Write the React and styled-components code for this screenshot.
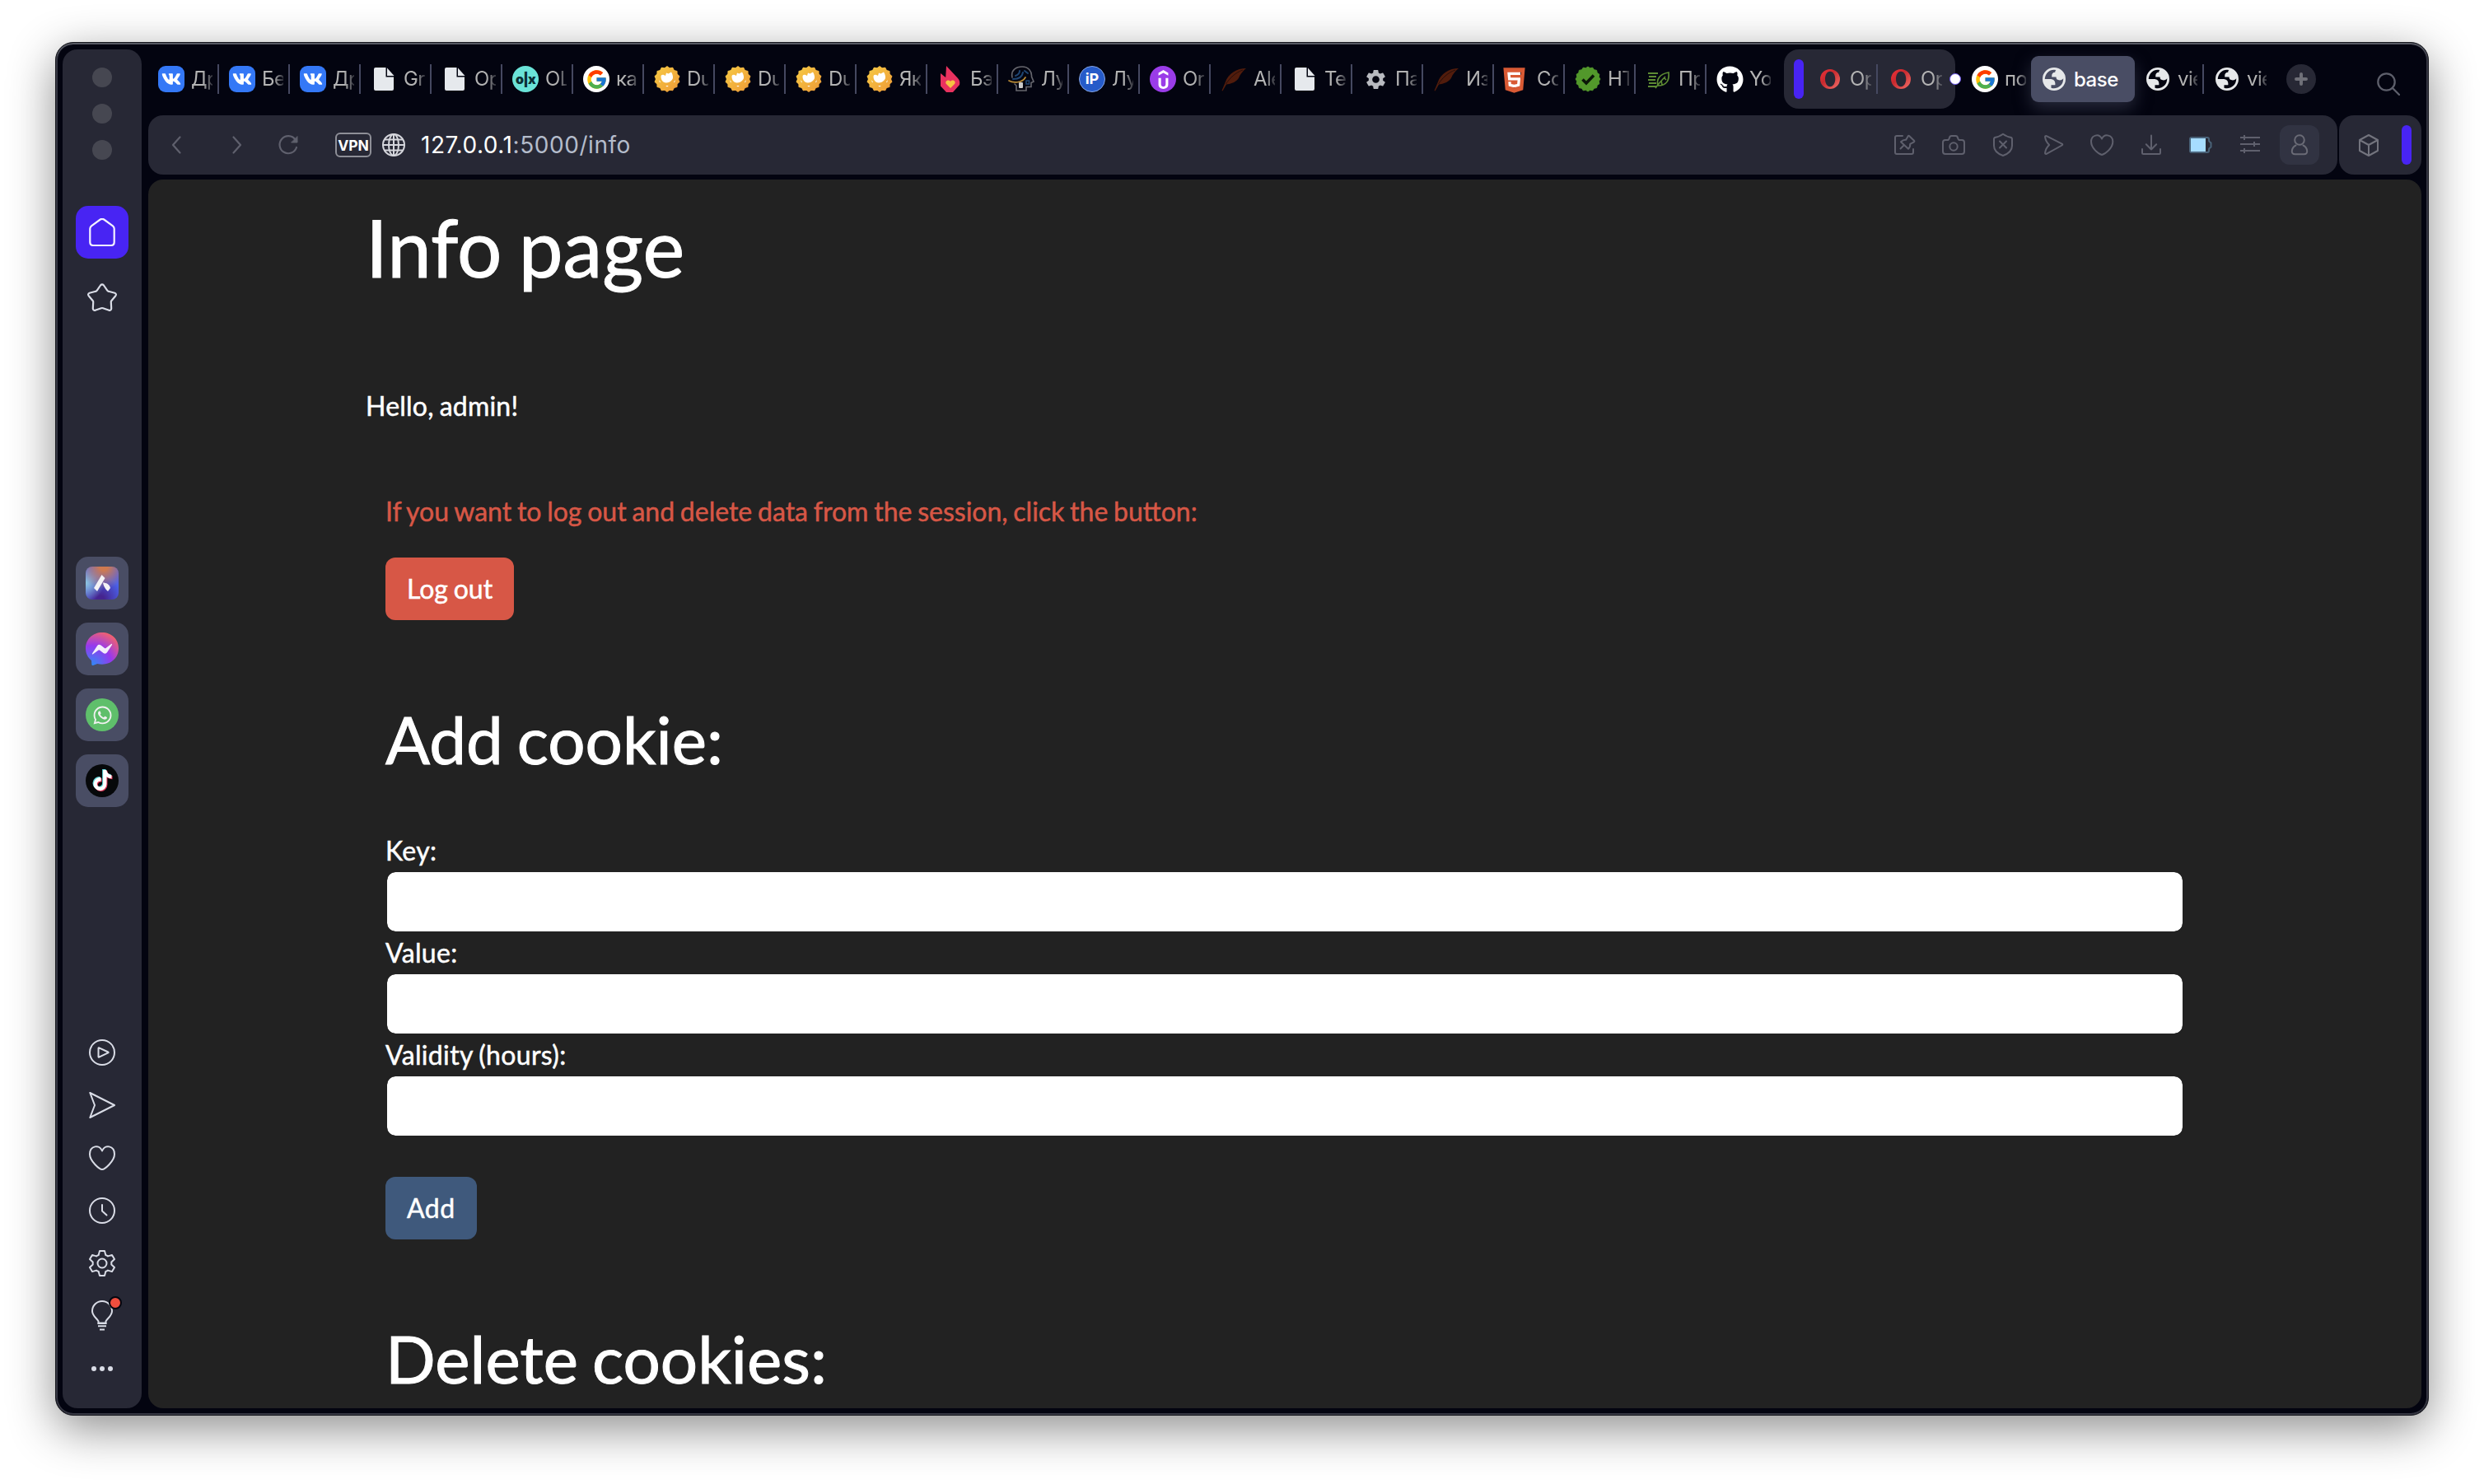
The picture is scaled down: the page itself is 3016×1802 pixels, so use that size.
import React from 'react';
import styled, { createGlobalStyle, css } from 'styled-components';
import { FcGoogle } from 'react-icons/fc';
import { FaVk, FaGithub, FaHtml5, FaWhatsapp, FaTiktok } from 'react-icons/fa';
import { SiUdemy } from 'react-icons/si';
import { MdSettings } from 'react-icons/md';

const GlobalStyle = createGlobalStyle`
  * { box-sizing: border-box; }
  body { margin: 0; background: #fff; }
  svg { display: block; flex: none; }
`;

/* ---------- window frame ---------- */
const Desktop = styled.div`
  width: 3016px;
  height: 1802px;
  padding: 51px 67px 83px;
  overflow: hidden;
  background: #fff;
  font-family: Inter, 'Noto Sans', sans-serif;
`;
const Window = styled.div`
  display: flex;
  gap: 8px;
  width: 2882px;
  height: 1668px;
  padding: 8px;
  border: 1px solid #17181e;
  border-radius: 22px;
  background: #030410;
  box-shadow: inset 0 2px 0 #565862, inset 0 0 0 2px #353642,
    0 16px 56px rgba(0, 0, 0, 0.45);
`;
const Main = styled.div`
  display: flex;
  flex-direction: column;
  flex: 1;
  min-width: 0;
`;

/* ---------- sidebar ---------- */
const Sidebar = styled.aside`
  display: flex;
  flex-direction: column;
  align-items: center;
  flex: none;
  width: 96px;
  padding: 22px 0 16px;
  border-radius: 18px;
  background: #272835;
`;
const Lights = styled.div`
  display: flex;
  flex-direction: column;
  gap: 20px;
`;
const Light = styled.i`
  width: 24px;
  height: 24px;
  border-radius: 50%;
  background: #464751;
`;
const SideGroup = styled.nav`
  display: flex;
  flex-direction: column;
  gap: ${(p) => p.$gap}px;
  margin-top: ${(p) => p.$top};
`;
const SideButton = styled.div`
  position: relative;
  display: flex;
  align-items: center;
  justify-content: center;
  width: 64px;
  height: 64px;
  border-radius: 15px;
  color: #d9dce6;
  background: ${(p) => p.$bg || 'transparent'};
`;
const Notice = styled.i`
  position: absolute;
  top: 8px;
  right: 8px;
  width: 16px;
  height: 16px;
  border: 2px solid #05060f;
  border-radius: 50%;
  background: #f04e3e;
`;
const AppIcon = styled.div`
  position: relative;
  display: flex;
  align-items: center;
  justify-content: center;
  width: 40px;
  height: 40px;
  border-radius: ${(p) => p.$radius || '50%'};
  background: ${(p) => p.$bg || 'transparent'};
  color: #f0f0f0;
`;
const NoteLayer = styled.span`
  position: absolute;
  left: ${(p) => 8 + p.$shift}px;
  top: ${(p) => 7 + p.$shift}px;
  color: ${(p) => p.$color};
`;

/* ---------- tabs ---------- */
const TabStrip = styled.header`
  display: flex;
  align-items: center;
  height: 72px;
  margin-bottom: 8px;
`;
const TabBox = styled.div`
  display: flex;
  align-items: center;
  flex: none;
  width: ${(p) => p.$w}px;
  height: 36px;
  padding-left: 12px;
  border-right: 2px solid ${(p) => (p.$last ? 'transparent' : '#454860')};
`;
const Favicon = styled.div`
  display: flex;
  align-items: center;
  justify-content: center;
  flex: none;
  width: 32px;
  height: 32px;
  margin-right: 8px;
`;
const TabTitle = styled.span`
  width: ${(p) => p.$w}px;
  overflow: hidden;
  color: #b4b4b4;
  font-size: 24px;
  letter-spacing: -0.6px;
  line-height: 36px;
  white-space: nowrap;
  mask-image: linear-gradient(to right, #000 55%, transparent 115%);
`;
const TabIsland = styled.div`
  position: relative;
  display: flex;
  align-items: center;
  width: 208px;
  height: 72px;
  margin: 0 8px;
  padding-left: 12px;
  border-radius: 18px;
  background: #272835;
`;
const IslandMark = styled.i`
  width: 12px;
  height: 48px;
  margin-right: ${(p) => p.$gap || 0}px;
  border-radius: 6px;
  background: #4824f3;
`;
const IslandDot = styled.i`
  position: absolute;
  top: 29px;
  right: -7px;
  width: 14px;
  height: 14px;
  border: 1px solid #6b55ea;
  border-radius: 50%;
  background: #fff;
`;
const ActiveTab = styled.div`
  display: flex;
  align-items: center;
  gap: 10px;
  width: 126px;
  height: 56px;
  margin-left: -2px;
  padding-left: 14px;
  border-radius: 9px;
  background: #494d64;
  box-shadow: 0 8px 20px rgba(73, 77, 100, 0.5);
  color: #fff;
  font-size: 24px;
  font-weight: 500;
  letter-spacing: -0.5px;
`;
const NewTab = styled.div`
  display: flex;
  align-items: center;
  justify-content: center;
  width: 36px;
  height: 36px;
  margin-left: 16px;
  border-radius: 50%;
  background: #272835;
`;
const SearchSlot = styled.div`
  margin: 12px 26px 0 auto;
`;
const badgeText = css`
  font-family: Inter, sans-serif;
  font-weight: 700;
  line-height: 32px;
  text-align: center;
`;
const RoundBadge = styled.div`
  ${badgeText}
  display: flex;
  align-items: center;
  justify-content: center;
  width: 32px;
  height: 32px;
  border-radius: ${(p) => p.$radius || '50%'};
  border: ${(p) => p.$border || 'none'};
  background: ${(p) => p.$bg};
  color: ${(p) => p.$fg || '#fff'};
  font-size: ${(p) => p.$size || 16}px;
  font-weight: ${(p) => p.$weight || 700};
  letter-spacing: ${(p) => p.$track || 0}px;
`;
const ShieldBadge = styled.div`
  display: flex;
  justify-content: center;
  width: 28px;
  height: 32px;
  margin-right: auto;
  margin-left: -2px;
  background: linear-gradient(#fff, #fff) center / 16px 20px no-repeat;
`;

/* ---------- address bar ---------- */
const ToolRow = styled.div`
  display: flex;
  gap: 2px;
  height: 72px;
  margin-bottom: 6px;
`;
const AddressBar = styled.div`
  display: flex;
  align-items: center;
  width: 2658px;
  padding: 0 16px 0 0;
  border-radius: 18px;
  background: #272835;
`;
const NavButtons = styled.div`
  display: grid;
  grid-template-columns: 74px 62px 32px;
  padding-left: 18px;
  color: #5f606d;
`;
const Vpn = styled.span`
  width: 44px;
  height: 30px;
  margin: 0 13px 0 41px;
  border: 2px solid #8e8f97;
  border-radius: 6px;
  color: #fff;
  font-size: 17.5px;
  font-weight: 700;
  line-height: 27px;
  text-align: center;
`;
const Url = styled.span`
  margin-left: 19px;
  color: #b4bccb;
  font-size: 28px;
  letter-spacing: 0.56px;
  white-space: nowrap;
`;
const Host = styled.span`
  color: #fff;
`;
const Actions = styled.div`
  display: flex;
  margin-left: auto;
  color: #5f606d;
`;
const Action = styled.div`
  display: flex;
  align-items: center;
  justify-content: center;
  width: 60px;
  height: 48px;
`;
const Profile = styled.div`
  display: flex;
  align-items: center;
  justify-content: center;
  width: 48px;
  height: 48px;
  border-radius: 12px;
  background: #313342;
`;
const SideTools = styled.div`
  display: flex;
  align-items: center;
  justify-content: space-between;
  width: 100px;
  padding: 0 12px 0 20px;
  border-radius: 18px;
  background: #272835;
  color: #73747e;
`;

/* ---------- web page ---------- */
const Page = styled.main`
  flex: 1;
  min-height: 0;
  overflow: hidden;
  padding: 24px 288px 0 264px;
  border-radius: 18px;
  background: #222;
  color: #fff;
  font-family: Lato, sans-serif;
  font-size: 32px;
  line-height: 48px;
  word-spacing: -0.045em;
  -webkit-text-stroke: 0.5px currentColor;
`;
const Title = styled.h1`
  margin: 0 0 112px;
  font-size: 96px;
  font-weight: 400;
  line-height: 115px;
  word-spacing: -0.045em;
  -webkit-text-stroke-width: 1px;
`;
const Greeting = styled.p`
  margin: 0 0 80px;
  letter-spacing: 0.22px;
`;
const Section = styled.section`
  padding-left: 24px;
`;
const Warning = styled.p`
  margin: 0 0 32px;
  color: #d75746;
`;
const Button = styled.button`
  display: block;
  height: 76px;
  padding: 0 26px;
  border: 0;
  border-radius: 12px;
  background: ${(p) => (p.$danger ? '#d75746' : '#3f597c')};
  color: #fff;
  font: inherit;
  letter-spacing: ${(p) => p.$track || 0}px;
  word-spacing: -0.045em;
`;
const Heading = styled.h2`
  margin: 96px 0 64px;
  font-size: 80px;
  font-weight: 400;
  line-height: 96px;
  word-spacing: -0.045em;
  -webkit-text-stroke-width: 1px;
`;
const Label = styled.label`
  display: block;
  letter-spacing: 0.35px;
`;
const Input = styled.input`
  display: block;
  width: 100%;
  height: 76px;
  border: 2px solid #222;
  border-radius: 12px;
  background: #fff;
  background-clip: padding-box;
`;
const Form = styled.form`
  margin: 0;
`;
const Submit = styled.div`
  margin-top: 48px;
`;

/* ---------- drawn icons ---------- */
const Line = ({ size = 32, w = 2, children, ...rest }) => (
  <svg width={size} height={size} viewBox="0 0 32 32" fill="none" stroke="currentColor"
    strokeWidth={w} strokeLinecap="round" strokeLinejoin="round" {...rest}>{children}</svg>
);

const DocIcon = () => (
  <svg width="32" height="32" viewBox="0 0 32 32" fill="#e6e9ed">
    <path d="M6 2h12.500v11.500H28V28a2 2 0 0 1-2 2H6a2 2 0 0 1-2-2V4a2 2 0 0 1 2-2z" />
    <path d="M20 2.500 28.500 12H20z" />
  </svg>
);
const scallop = (cx, cy, r, d, n) => {
  const pts = [];
  for (let i = 0; i < n * 2; i += 1) {
    const a = (Math.PI * i) / n - Math.PI / 2;
    const q = i % 2 ? r - d : r;
    pts.push(`${(cx + q * Math.cos(a)).toFixed(2)},${(cy + q * Math.sin(a)).toFixed(2)}`);
  }
  return pts.join(' ');
};
const OwlIcon = () => (
  <svg width="32" height="32" viewBox="0 0 32 32">
    <defs>
      <linearGradient id="owl" x1="0" y1="0" x2="1" y2="1">
        <stop offset="0" stopColor="#f7cb45" /><stop offset="1" stopColor="#ee9a36" />
      </linearGradient>
    </defs>
    <polygon points={scallop(16, 16, 15.2, 1.8, 14)} fill="url(#owl)" stroke="url(#owl)" strokeWidth="1.2" strokeLinejoin="round" />
    <path fill="#fff" d="M8.500 13c0-1.800 1.500-2.500 3.500-2l2 1 1-3.500 2.500 1L21 7.500c1 1.500 1.800 3.500 2 5.500.3 2-.5 3.500-1.800 4.800-1.700 2.400-7 3.700-9.700 1.700-2-1.500-3-3.500-3-6.500z" />
    <path fill="#fff" d="M6 17l2 2.500-1 .8zM26 17l-2 2.500 1 .8zM14.200 24h3.600l-1.800 1.600z" />
  </svg>
);
const FlameIcon = () => (
  <svg width="32" height="32" viewBox="0 0 32 32">
    <path fill="#e9325f" d="M11 0l14 15c2.500 3 2.500 5 2 8l-8 9h-8L4 24.500V9l6.200 5z" />
    <path fill="#f6c343" d="M16 27l-5-5c-2.500-3 2-6.500 5-3.200 3-3.300 7.500.2 5 3.200z" />
  </svg>
);
const HeadIcon = () => (
  <svg width="32" height="32" viewBox="0 0 32 32" fill="none" strokeLinecap="round">
    <path stroke="#67676e" strokeWidth="1.600" d="M5 14C3 5 10 1 17 1c8 0 12 6 11.500 12l2.500 6-3 1.500v5h-6v4.500H10v-6l-2-2" />
    <path stroke="#1f4673" strokeWidth="2" d="M6 16c6 0 11-2 12-8M9 12c3-1 5-3 5-6M20 6l4 3" />
    <path stroke="#b98a35" strokeWidth="1.700" d="M1 18c5 3 16 3 20-4" />
    <rect x="13" y="20" width="5" height="7" rx="1" fill="#c9c9c9" />
    <path stroke="#1f4673" strokeWidth="1.500" d="M22 18h3.500v4H22z" />
  </svg>
);
const FeatherIcon = () => (
  <svg width="32" height="32" viewBox="0 0 32 32">
    <path fill="#511c0c" d="M31 3C20 3 9 9 5.500 20.500L1.500 30l1 .5L7 22.500c10-1 15-6 16.500-11C26 8 28 5 31 3z" />
    <path stroke="#1c0b0b" strokeWidth=".8" fill="none" d="M6.500 22C11 15 18 8 27 5" />
  </svg>
);
const CheckBadge = () => (
  <svg width="32" height="32" viewBox="0 0 32 32">
    <polygon points={scallop(16, 16, 15, 1.500, 16)} fill="#52982b" stroke="#52982b" strokeLinejoin="round" />
    <path fill="none" stroke="#0b1708" strokeWidth="3.600" d="M9.500 16.500l4.500 4.500L23 11.500" />
  </svg>
);
const LeafIcon = () => (
  <svg width="32" height="32" viewBox="0 0 32 32" fill="none" stroke="#5d8b33" strokeWidth="2">
    <path d="M3 9h12M4 13h9M3 17h9M4 21h9M3 25h10" />
    <path d="M15 24c-2-8 2-14 13-16 1 9-2 16-13 16zM12 27c4-6 8-10 12-14M19 18l1 5M22 14l3 3" strokeWidth="1.700" />
  </svg>
);
const OperaIcon = () => (
  <svg width="24" height="24" viewBox="0 0 24 24">
    <defs>
      <linearGradient id="op" x1="0" y1="0" x2="1" y2="1">
        <stop offset="0" stopColor="#f0323a" /><stop offset=".4" stopColor="#c9292e" /><stop offset="1" stopColor="#f2706a" />
      </linearGradient>
    </defs>
    <path fillRule="evenodd" fill="url(#op)" d="M12 0a12 12 0 1 1 0 24 12 12 0 0 1 0-24zM12 2.800c-3.800 0-6 4.200-6 9.200s2.200 9.200 6 9.200 6.300-4.200 6.300-9.200S15.800 2.800 12 2.800z" />
  </svg>
);
const GlobeIcon = () => (
  <svg width="28" height="28" viewBox="2 2 20 20" fill="#e6e8ea">
    <path fillRule="evenodd" d="M12 2a10 10 0 1 0 0 20 10 10 0 0 0 0-20zM4 12h4.400c3.407.022 4.922 1.730 4.543 5.127H9.488v2.470a8.004 8.004 0 0 0 10.498-8.083C19.327 12.504 18.332 13 17 13c-2.137 0-3.206-.916-3.206-2.750h-3.748c-.274-2.728.683-4.092 2.870-4.092 0-.975.327-1.597.811-1.970A8.004 8.004 0 0 0 4 12z" />
  </svg>
);
const GoogleBadge = () => (
  <RoundBadge $bg="#fff"><FcGoogle size={27} /></RoundBadge>
);
const VkBadge = () => (
  <RoundBadge $bg="#3478f6" $radius="9px"><FaVk size={24} /></RoundBadge>
);

const favicons = {
  vk: <VkBadge />,
  doc: <DocIcon />,
  olx: <RoundBadge $bg="#6ae3d8" $fg="#0a2f35" $size={16} $weight={900} $track={-0.8}>o|x</RoundBadge>,
  google: <GoogleBadge />,
  owl: <OwlIcon />,
  flame: <FlameIcon />,
  head: <HeadIcon />,
  ip: <RoundBadge $bg="#265bc9" $border="1px solid #86a5e2" $size={18}>iP</RoundBadge>,
  udemy: <RoundBadge $bg="#9a3ce8"><SiUdemy size={23} /></RoundBadge>,
  feather: <FeatherIcon />,
  gear: <MdSettings size={29} color="#b8bac0" />,
  html5: <ShieldBadge><FaHtml5 size={35} color="#d95a34" /></ShieldBadge>,
  check: <CheckBadge />,
  leaf: <LeafIcon />,
  github: <FaGithub size={33} color="#fff" />,
  opera: <OperaIcon />,
  globe: <GlobeIcon />,
};

const tabs = [
  ['vk', 'Др'], ['vk', 'Бе'], ['vk', 'Др'], ['doc', 'Gr'], ['doc', 'Op'], ['olx', 'OL'],
  ['google', 'ка'], ['owl', 'Du'], ['owl', 'Du'], ['owl', 'Du'], ['owl', 'Як'], ['flame', 'Бэ'],
  ['head', 'Лу'], ['ip', 'Лу'], ['udemy', 'Or'], ['feather', 'Ale'], ['doc', 'Te'], ['gear', 'Па'],
  ['feather', 'Из'], ['html5', 'Со'], ['check', 'HT'], ['leaf', 'Пр'], ['github', 'Yo'],
];

const Tab = ({ icon, title, last, w = 86 }) => (
  <TabBox $w={w} $last={last}>
    <Favicon>{favicons[icon]}</Favicon>
    <TabTitle $w={w - 60}>{title}</TabTitle>
  </TabBox>
);

const SearchIcon = () => (
  <Line size={28} w={2.3} color="#5d5f6b" viewBox="0 0 28 28">
    <circle cx="11.500" cy="11.500" r="10.200" /><path d="M18.800 18.800L27 27" />
  </Line>
);

const Tabs = () => (
  <TabStrip>
    {tabs.map(([icon, title], i) => (
      <Tab key={i} icon={icon} title={title} last={i === tabs.length - 1} />
    ))}
    <TabIsland>
      <IslandMark $gap={4} />
      <Tab icon="opera" title="Op" />
      <Tab icon="opera" title="Op" last />
      <IslandDot />
    </TabIsland>
    <Tab icon="google" title="по" last />
    <ActiveTab><GlobeIcon />base</ActiveTab>
    <Tab icon="globe" title="vie" w={84} />
    <Tab icon="globe" title="vie" w={84} last />
    <NewTab>
      <Line size={16} w={4} viewBox="0 0 16 16" color="#6f7078"><path d="M8 2v12M2 8h12" /></Line>
    </NewTab>
    <SearchSlot><SearchIcon /></SearchSlot>
  </TabStrip>
);

const Toolbar = () => (
  <ToolRow>
    <AddressBar>
      <NavButtons>
        <Line w={2.2}><path d="M20.500 6.500L12 16l8.500 9.500" /></Line>
        <Line w={2.2}><path d="M11.500 6.500l8.500 9.500-8.500 9.500" /></Line>
        <Line w={2.2}>
          <path d="M24.500 9.500A10.500 10.500 0 1 0 26 19" /><path d="M27 6v7h-7z" fill="currentColor" strokeWidth="1" />
        </Line>
      </NavButtons>
      <Vpn>VPN</Vpn>
      <Line size={28} w={2} viewBox="0 0 28 28" color="#d5d6dc">
        <circle cx="14" cy="14" r="13" /><ellipse cx="14" cy="14" rx="6" ry="13" />
        <path d="M14 1v26M1 14h26M3.500 7.500h21M3.500 20.500h21" />
      </Line>
      <Url><Host>127.0.0.1</Host>:5000/info</Url>
      <Actions>
        <Action><Line>
          <path d="M14 5H7a2 2 0 0 0-2 2v18a2 2 0 0 0 2 2h18a2 2 0 0 0 2-2v-4" />
          <path d="M11.500 20.500l4.300-4.300M12 12.300c2-2 4-2.800 6.200-2.500l2.600-4.600q.7-.8 1.500 0l5.700 5.600q.8.800 0 1.500l-4.800 2.500c.3 2.400-.5 4.400-2.200 6z" />
        </Line></Action>
        <Action><Line>
          <path d="M6 10h2.500c1.500 0 2-1 2.300-2.300C11.200 5.800 12 5 13.500 5h5c1.500 0 2.300.8 2.700 2.700C21.500 9 22 10 23.500 10H26a3 3 0 0 1 3 3v11a3 3 0 0 1-3 3H6a3 3 0 0 1-3-3V13a3 3 0 0 1 3-3z" />
          <circle cx="16" cy="18" r="4.700" />
        </Line></Action>
        <Action><Line>
          <path d="M16 2.800C12.500 5.200 9 6.500 7 6.700q-2 .3-2 2.300v8c0 6 5.500 10 11 12 5.500-2 11-6 11-12V9q0-2-2-2.300c-2-.2-5.500-1.500-9-3.900z" />
          <path d="M12 11.500l8 8M20 11.500l-8 8" />
        </Line></Action>
        <Action><Line>
          <path d="M8.800 5.200l18.700 9.400q1.600 1 0 1.900L8.800 26.800q-2 .6-1.700-1.500c.5-3.300 2-6.500 5-9.300-3-2.800-4.500-6-5-9.300q-.3-2.100 1.700-1.500z" />
        </Line></Action>
        <Action><Line>
          <path d="M16 28c-4-1-13-8-13-16 0-8 9.500-10.500 13-3.500 3.500-7 13.300-4.500 13.300 3.500 0 8-9.300 15-13.300 16z" />
        </Line></Action>
        <Action><Line><path d="M16 4.500v17M9.800 15.300L16 21.500l6.200-6.200M5 21v4.500a1.500 1.500 0 0 0 1.500 1.500h19a1.500 1.500 0 0 0 1.500-1.500V21" /></Line></Action>
        <Action><Line color="#4a6379">
          <path d="M5 7h19q2 0 2 2l.2 2.500 2.300 2v5l-2.300 2L26 23q0 2-2 2H5q-2 0-2-2V9q0-2 2-2z" />
          <rect x="4" y="8" width="18" height="16" fill="#a6dcff" stroke="none" />
        </Line></Action>
        <Action><Line><path strokeLinecap="butt" d="M4 7h24M4 15h24M4 23h24M9 4v6M21 12v6M9 20v6" /></Line></Action>
        <Action><Profile><Line color="#6a6b76">
          <circle cx="16" cy="10" r="5.800" />
          <path d="M11.500 16.500C8.500 18 7 20.500 6.800 23.500 6.700 26 8 27.200 10.500 27.200h11c2.500 0 3.800-1.200 3.700-3.700-.2-3-1.700-5.500-4.700-7" />
        </Line></Profile></Action>
      </Actions>
    </AddressBar>
    <SideTools>
      <Line><path d="M16 4l11 6v13l-11 6-11-6V10zM5 10l11 6 11-6M16 16v13" /></Line>
      <IslandMark />
    </SideTools>
  </ToolRow>
);

const SideNav = () => (
  <Sidebar>
    <Lights><Light /><Light /><Light /></Lights>
    <SideGroup $gap={16} $top="56px">
      <SideButton $bg="#4824f3">
        <Line size={34} viewBox="0 0 34 34" w={2.200} color="#f4f2ff">
          <path d="M14.800 1.500q2.200-1.300 4.400 0L30 9.300q1.700 1.400 1.700 3.500V29q0 4-4 4H6.300q-4 0-4-4V12.800q0-2.100 1.700-3.500z" />
        </Line>
      </SideButton>
      <SideButton>
        <Line size={36} viewBox="0 0 36 36" w={2.200}>
          <path d="M16 2.500q2-2.200 4 0l4.200 6.200q.6.900 1.600 1.100l7.500 2q2.600 1.100 1 3.400l-5 6q-.6.800-.5 1.800l.4 7.600q-.3 2.700-2.800 2.200l-7.300-2.600q-1.100-.4-2.200 0l-7.300 2.600q-2.500.5-2.800-2.200l.4-7.600q.1-1-.5-1.800l-5-6q-1.600-2.300 1-3.400l7.500-2q1-.2 1.600-1.100z" />
        </Line>
      </SideButton>
    </SideGroup>
    <SideGroup $gap={16} $top="282px">
      <SideButton $bg="#494d64">
        <AppIcon $radius="8px" $bg="radial-gradient(circle at 55% 0%, #cf7a50 10%, transparent 60%), radial-gradient(circle at 0% 50%, #8fc6dd, transparent 50%), radial-gradient(circle at 45% 100%, #45248f 10%, transparent 60%), #4b62ea">
          <svg width="40" height="40" viewBox="0 0 40 40" fill="#f4f2f5">
            <path d="M19.500 10l4 4L14 30l-4-4z" /><path d="M21 19.500c4 0 8 2 9 6.500l-3 4c-2-1.500-5-5-6-10.500z" />
          </svg>
        </AppIcon>
      </SideButton>
      <SideButton $bg="#494d64">
        <svg width="40" height="40" viewBox="0 0 40 40">
          <defs>
            <radialGradient id="ms" cx=".2" cy="1" r="1.100">
              <stop offset="0" stopColor="#2f8bf5" /><stop offset=".55" stopColor="#9638ee" /><stop offset="1" stopColor="#f5636a" />
            </radialGradient>
          </defs>
          <path fill="url(#ms)" d="M20 0c11.300 0 20 8.200 20 19.300S31.300 38.700 20 38.700c-2 0-4-.3-5.800-.8L9 40q-1.700.3-1.700-1.500L7 34C2.500 30.500 0 25.500 0 19.300 0 8.200 8.700 0 20 0z" />
          <path fill="#f4eefb" d="M8 25.500l6-9.300q1.800-2.500 4.500-.8l4.500 3.500q.7.500 1.500 0l6.500-4.800q1.500-.8 1 .8l-6 9.300q-1.800 2.500-4.500.8l-4.500-3.500q-.7-.5-1.500 0L9 26.300q-1.600.8-1-.8z" />
        </svg>
      </SideButton>
      <SideButton $bg="#494d64"><AppIcon $bg="#5fbf6b"><FaWhatsapp size={25} /></AppIcon></SideButton>
      <SideButton $bg="#494d64">
        <AppIcon $bg="#06080a">
          <NoteLayer $color="#64d8dc" $shift={-1}><FaTiktok size={25} /></NoteLayer>
          <NoteLayer $color="#df3759" $shift={1}><FaTiktok size={25} /></NoteLayer>
          <NoteLayer $color="#fff" $shift={0}><FaTiktok size={25} /></NoteLayer>
        </AppIcon>
      </SideButton>
    </SideGroup>
    <SideGroup $gap={0} $top="auto">
      <SideButton><Line><circle cx="16" cy="16" r="15" /><path d="M11.500 10.800q0-.8.800-.5l11 5.200q.8.500 0 .9l-11 5.300q-.8.300-.8-.5z" /></Line></SideButton>
      <SideButton><Line><path d="M1.300 1L31 16 1.300 31 7 16z" /></Line></SideButton>
      <SideButton><Line><path d="M16 30C13 30 1 20 1 11.500 1 1 13 -1 16 7.500 19 -1 31 1 31 11.500 31 20 19 30 16 30z" /></Line></SideButton>
      <SideButton><Line><circle cx="16" cy="16" r="15" /><path d="M16 9v7.500l5.500 5" /></Line></SideButton>
      <SideButton><Line>
        <path d="M13 1h6l1.300 5q1.600.6 2.700 1.400l5-1.500 3 5.200-3.700 3.500v2.800L31 20.900l-3 5.200-5-1.500q-1.100.9-2.700 1.400L19 31h-6l-1.300-5q-1.600-.6-2.700-1.400l-5 1.500-3-5.200 3.700-3.500v-2.800L1 11.100l3-5.200 5 1.500Q10.100 6.500 11.700 6z" />
        <circle cx="16" cy="16" r="5.500" />
      </Line></SideButton>
      <SideButton>
        <svg width="32" height="38" viewBox="0 0 32 38" fill="none" stroke="currentColor" strokeWidth="2">
          <path d="M11.500 27.500v-2C10 22 4 19 4 13a12 12 0 0 1 24 0c0 6-6 9-7.500 12.500v2z" />
          <path d="M10.500 28h11M11 31.300h10M13 35.500h6" />
        </svg>
        <Notice />
      </SideButton>
      <SideButton><Line stroke="none" fill="currentColor"><circle cx="6" cy="16" r="3" /><circle cx="16" cy="16" r="3" /><circle cx="26" cy="16" r="3" /></Line></SideButton>
    </SideGroup>
  </Sidebar>
);

const fields = ['Key:', 'Value:', 'Validity (hours):'];

const InfoPage = () => (
  <Page>
    <Title>Info page</Title>
    <Greeting>Hello, admin!</Greeting>
    <Section>
      <Warning>If you want to log out and delete data from the session, click the button:</Warning>
      <Button $danger>Log out</Button>
      <Heading>Add cookie:</Heading>
      <Form>
        {fields.map((name) => (
          <Label key={name}>{name}<Input /></Label>
        ))}
        <Submit><Button type="button" $track={0.5}>Add</Button></Submit>
      </Form>
      <Heading>Delete cookies:</Heading>
    </Section>
  </Page>
);

export default function App() {
  return (
    <Desktop>
      <GlobalStyle />
      <Window>
        <SideNav />
        <Main>
          <Tabs />
          <Toolbar />
          <InfoPage />
        </Main>
      </Window>
    </Desktop>
  );
}
